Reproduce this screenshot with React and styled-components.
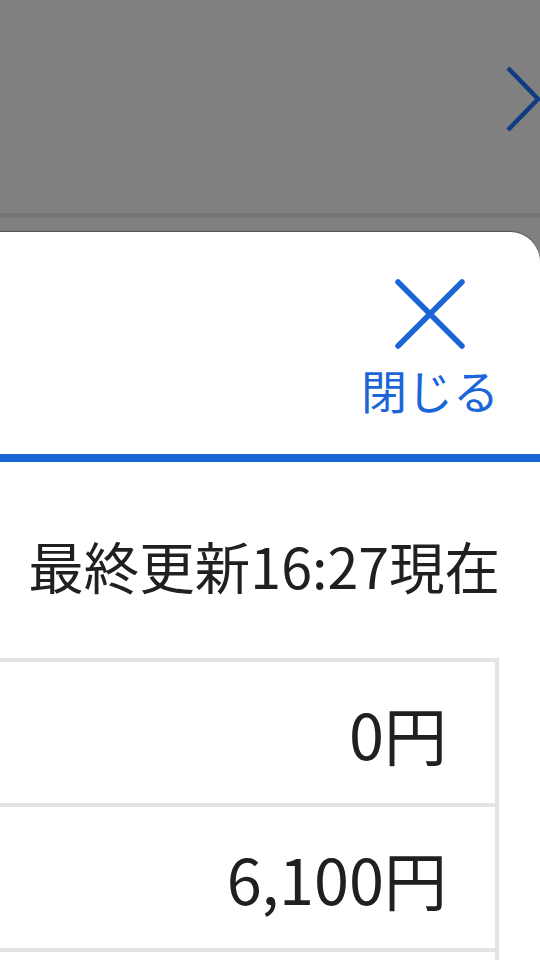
import React from 'react';
import styled, { createGlobalStyle } from 'styled-components';

const GlobalStyle = createGlobalStyle`
  html, body {
    margin: 0;
    padding: 0;
    background: #808080;
    overflow: hidden;
  }
  body {
    font-family: "Noto Sans CJK JP", "Noto Sans", sans-serif;
  }
`;

const rows = [
  { id: 1, amount: '0円' },
  { id: 2, amount: '6,100円' },
  { id: 3, amount: '' },
];

const App = () => (
  <>
    <GlobalStyle />
    <Page>
      <Backdrop>
        <svg width="40" height="70" viewBox="0 0 40 70">
          <path d="M4 4 L34 35 L4 66" fill="none" stroke="#0f3c82" strokeWidth="4.5" />
        </svg>
      </Backdrop>
      <BackdropRule />

      <Sheet>
        <SheetHeader>
          <CloseButton>
            <svg width="70" height="70" viewBox="0 0 70 70">
              <path d="M3 3 L67 67 M67 3 L3 67" stroke="#1a66d8" strokeWidth="5.5" strokeLinecap="round" />
            </svg>
            <span>閉じる</span>
          </CloseButton>
        </SheetHeader>
        <BlueRule />

        <Updated>最終更新16:27現在</Updated>

        <AmountTable>
          <tbody>
            {rows.map((r) => (
              <tr key={r.id}>
                <AmountCell>{r.amount}</AmountCell>
              </tr>
            ))}
          </tbody>
        </AmountTable>
      </Sheet>
    </Page>
  </>
);

const Page = styled.div`
  width: 540px;
  height: 960px;
  overflow: hidden;
  display: flex;
  flex-direction: column;
  background: #808080;

  & > * {
    flex-shrink: 0;
  }
`;

const Backdrop = styled.div`
  height: 213px;
  display: flex;
  justify-content: flex-end;
  align-items: flex-start;
  padding-top: 64px;
  box-sizing: border-box;
  margin-right: -4px;
`;

const BackdropRule = styled.div`
  height: 5px;
  background: #767676;
  margin-bottom: 14px;
`;

const Sheet = styled.div`
  flex: 1 0 auto;
  background: #fff;
  border-top-right-radius: 30px;
  box-shadow: 0 -1px 1px rgba(0, 0, 0, 0.35);
  display: flex;
  flex-direction: column;

  & > * {
    flex-shrink: 0;
  }
`;

const SheetHeader = styled.div`
  height: 222px;
  display: flex;
  justify-content: flex-end;
  padding-right: 41px;
  box-sizing: border-box;
`;

const CloseButton = styled.button`
  border: 0;
  background: none;
  padding: 0;
  margin-top: 47px;
  display: flex;
  flex-direction: column;
  align-items: center;
  color: #1a66d8;
  font-family: "Noto Sans CJK JP", sans-serif;
  font-size: 46px;
  line-height: 1;
  cursor: pointer;

  span {
    margin-top: 17px;
  }
`;

const BlueRule = styled.div`
  height: 8px;
  background: #1a66d8;
`;

const Updated = styled.div`
  text-align: right;
  padding: 70px 40px 0 0;
  font-size: 55.5px;
  line-height: 1.2;
  color: #202020;
`;

const AmountTable = styled.table`
  margin: 59px 41px 0 -20px;
  border-collapse: collapse;
  width: calc(100% - 21px);
`;

const AmountCell = styled.td`
  height: 141px;
  border: 4px solid #e4e4e4;
  text-align: right;
  padding: 0 48px 0 0;
  font-size: 63px;
  color: #202020;
  vertical-align: middle;
`;

export default App;
